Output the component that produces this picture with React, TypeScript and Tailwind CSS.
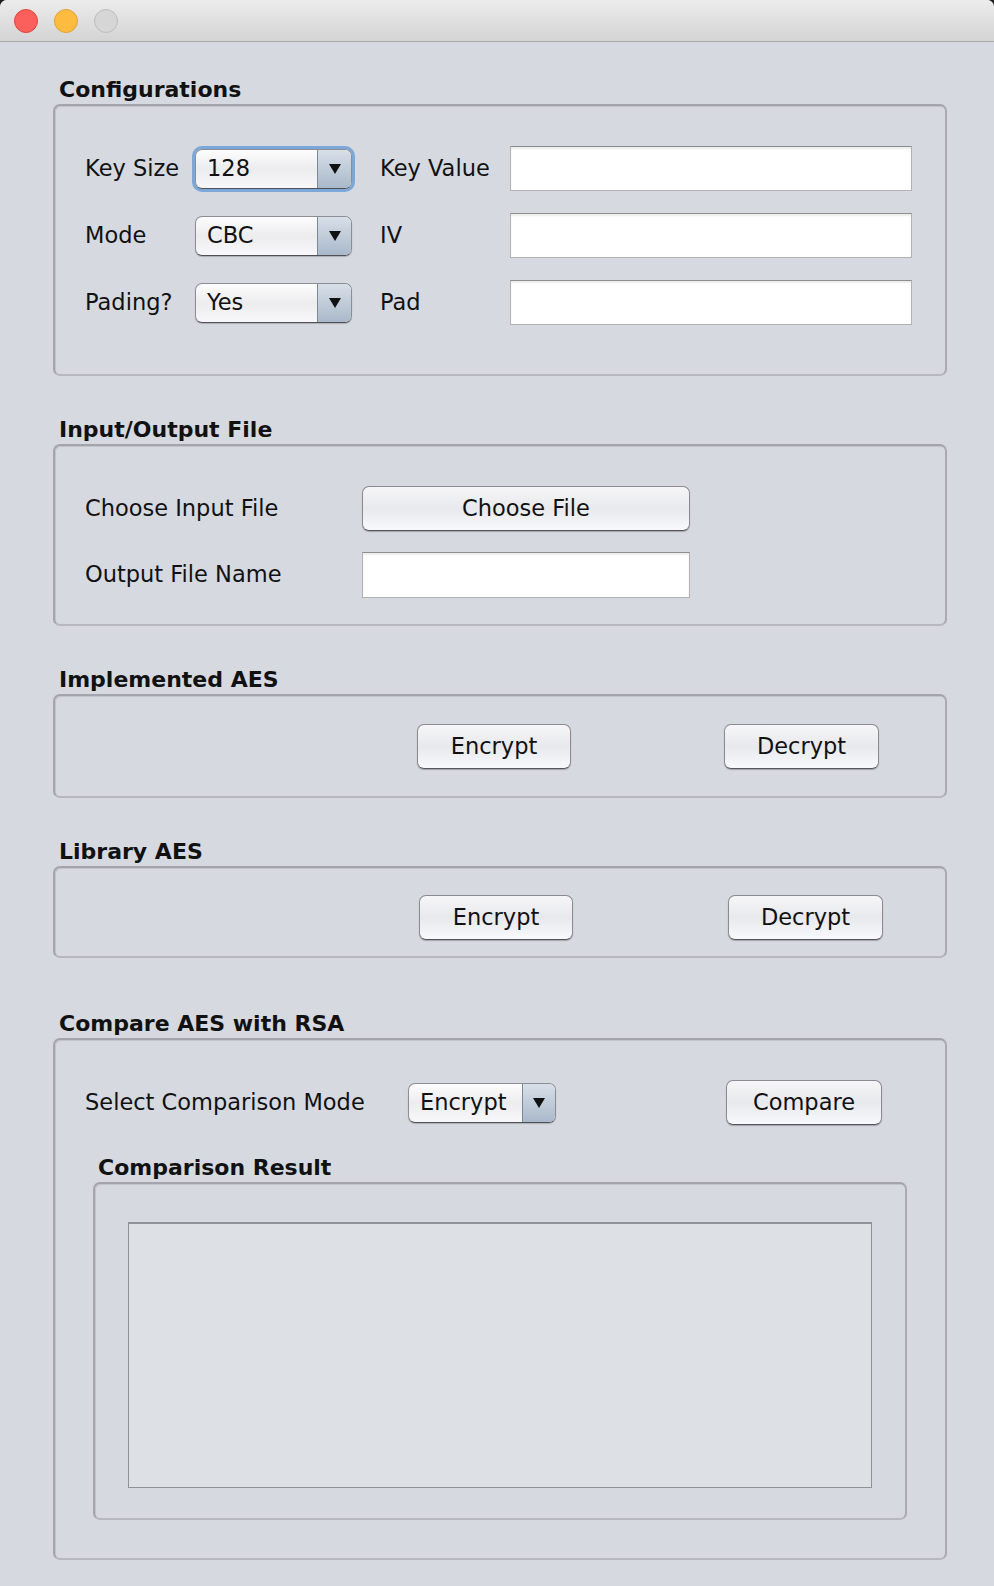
import React from "react";

const FONT = { fontFamily: '"DejaVu Sans", "Liberation Sans", sans-serif' };

function TitleBar() {
  return (
    <div className="h-[42px] border-b border-[#a9a9a9] bg-gradient-to-b from-[#ececec] to-[#d4d4d4] flex items-center pl-[14px] gap-[16px]">
      <span className="w-[24px] h-[24px] rounded-full bg-[#fc605c] border border-[#e0443e]" />
      <span className="w-[24px] h-[24px] rounded-full bg-[#fdbc40] border border-[#dea236]" />
      <span className="w-[24px] h-[24px] rounded-full bg-[#d6d6d6] border border-[#bdbdbd]" />
    </div>
  );
}

function GroupTitle({ children, className = "" }: { children: React.ReactNode; className?: string }) {
  return (
    <div className={`h-[28px] leading-[28px] font-bold text-[22px] text-[#111] whitespace-nowrap ${className}`}>
      {children}
    </div>
  );
}

function Box({ className = "", children }: { className?: string; children?: React.ReactNode }) {
  return (
    <div
      className={`rounded-[7px] border-2 border-[#a3a5ab] border-b-[#b6b8bd] border-r-[#a8aaaf] shadow-[inset_1px_1px_0_#c2c4c9] ${className}`}
    >
      {children}
    </div>
  );
}

function Combo({ value, width, arrow, focused }: { value: string; width: string; arrow: string; focused?: boolean }) {
  return (
    <div
      className={`${width} h-[40px] flex rounded-[7px] border border-[#8c8e94] border-b-[#4f5157] bg-gradient-to-b from-[#fdfdfd] via-[#ececef] to-[#f8f8fa] overflow-hidden ${
        focused ? "ring-[3px] ring-[#7ba8d8]" : "shadow-[0_1px_1px_rgba(0,0,0,0.2)]"
      }`}
    >
      <div className="flex-1 pl-[11px] flex items-center text-[22.5px] text-[#111]">{value}</div>
      <div
        className={`${arrow} border-l border-[#7d8896] bg-gradient-to-b from-[#d8dfe8] to-[#a9b9ca] flex items-center justify-center`}
      >
        <svg width="12" height="10" viewBox="0 0 12 10">
          <path d="M0 0 L12 0 L6 10 Z" fill="#111" />
        </svg>
      </div>
    </div>
  );
}

function Button({ label, width }: { label: string; width: string }) {
  return (
    <div
      className={`${width} h-[45px] rounded-[7px] border border-[#8a8b90] border-b-[#55565b] bg-gradient-to-b from-[#f6f6f8] via-[#e8e9ec] to-[#f8f9fc] shadow-[0_1px_1px_rgba(0,0,0,0.25)] flex items-center justify-center text-[22.5px] text-[#111]`}
    >
      {label}
    </div>
  );
}

function Field({ width, height = "h-[45px]" }: { width: string; height?: string }) {
  return (
    <div
      className={`${width} ${height} bg-white border border-[#b2b2b2] border-t-[#8d8d8d] shadow-[inset_0_2px_2px_rgba(0,0,0,0.08)]`}
    />
  );
}

export default function App() {
  return (
    <div className="w-[994px] h-[1586px] bg-[#1e1e1e]" style={FONT}>
      <div className="w-full h-full rounded-t-[7px] overflow-hidden bg-[#d6d9e0]">
        <TitleBar />
        <div className="pl-[53px] pt-[34px]">
          {/* Configurations */}
          <GroupTitle className="pl-[6px]">Configurations</GroupTitle>
          <Box className="w-[894px] h-[272px] pl-[30px] pt-[40px] flex flex-col gap-[22px]">
            <div className="flex items-center h-[45px] text-[22.5px] text-[#111]">
              <span className="w-[110px] whitespace-nowrap">Key Size</span>
              <Combo value="128" width="w-[157px]" arrow="w-[34px]" focused />
              <span className="ml-[28px] w-[130px] whitespace-nowrap">Key Value</span>
              <Field width="w-[402px]" />
            </div>
            <div className="flex items-center h-[45px] text-[22.5px] text-[#111]">
              <span className="w-[110px] whitespace-nowrap">Mode</span>
              <Combo value="CBC" width="w-[157px]" arrow="w-[34px]" />
              <span className="ml-[28px] w-[130px] whitespace-nowrap">IV</span>
              <Field width="w-[402px]" />
            </div>
            <div className="flex items-center h-[45px] text-[22.5px] text-[#111]">
              <span className="w-[110px] whitespace-nowrap">Pading?</span>
              <Combo value="Yes" width="w-[157px]" arrow="w-[34px]" />
              <span className="ml-[28px] w-[130px] whitespace-nowrap">Pad</span>
              <Field width="w-[402px]" />
            </div>
          </Box>

          {/* Input/Output File */}
          <GroupTitle className="pl-[6px] mt-[40px]">Input/Output File</GroupTitle>
          <Box className="w-[894px] h-[182px] pl-[30px] pt-[40px] flex flex-col gap-[21px]">
            <div className="flex items-center h-[45px] text-[22.5px] text-[#111]">
              <span className="w-[277px] whitespace-nowrap">Choose Input File</span>
              <Button label="Choose File" width="w-[328px]" />
            </div>
            <div className="flex items-center h-[46px] text-[22.5px] text-[#111]">
              <span className="w-[277px] whitespace-nowrap">Output File Name</span>
              <Field width="w-[328px]" height="h-[46px]" />
            </div>
          </Box>

          {/* Implemented AES */}
          <GroupTitle className="pl-[6px] mt-[40px]">Implemented AES</GroupTitle>
          <Box className="w-[894px] h-[104px] pt-[28px] flex">
            <div className="ml-[362px] flex gap-[153px]">
              <Button label="Encrypt" width="w-[154px]" />
              <Button label="Decrypt" width="w-[155px]" />
            </div>
          </Box>

          {/* Library AES */}
          <GroupTitle className="pl-[6px] mt-[40px]">Library AES</GroupTitle>
          <Box className="w-[894px] h-[92px] pt-[27px] flex">
            <div className="ml-[364px] flex gap-[155px]">
              <Button label="Encrypt" width="w-[154px]" />
              <Button label="Decrypt" width="w-[155px]" />
            </div>
          </Box>

          {/* Compare AES with RSA */}
          <GroupTitle className="pl-[6px] mt-[52px]">Compare AES with RSA</GroupTitle>
          <Box className="w-[894px] h-[522px] pt-[40px]">
            <div className="flex items-center h-[45px] pl-[30px] text-[22.5px] text-[#111]">
              <span className="w-[323px] whitespace-nowrap">Select Comparison Mode</span>
              <Combo value="Encrypt" width="w-[148px]" arrow="w-[33px]" />
              <div className="ml-[170px]">
                <Button label="Compare" width="w-[156px]" />
              </div>
            </div>
            <div className="ml-[38px] mt-[29px]">
              <GroupTitle className="pl-[5px]">Comparison Result</GroupTitle>
              <Box className="w-[814px] h-[338px] pl-[33px] pt-[38px]">
                <div className="w-[744px] h-[266px] bg-[#dde0e5] border border-[#8f9298] border-t-2" />
              </Box>
            </div>
          </Box>
        </div>
      </div>
    </div>
  );
}
